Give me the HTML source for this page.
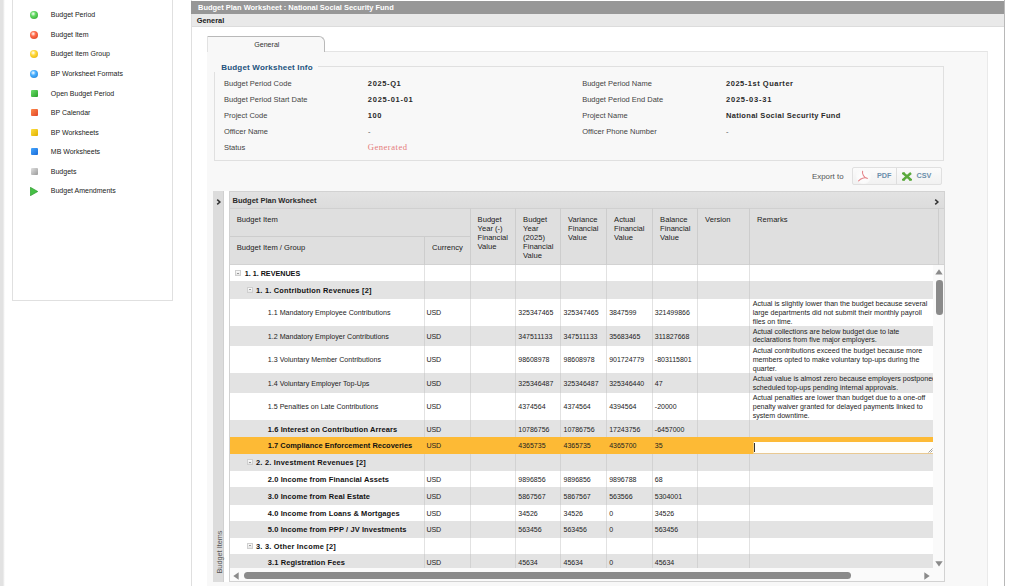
<!DOCTYPE html><html><head><meta charset="utf-8"><style>
*{box-sizing:border-box;margin:0;padding:0}
html,body{width:1024px;height:586px;overflow:hidden;background:#fff;font-family:"Liberation Sans",sans-serif;color:#333}
.a{position:absolute}
.t{position:absolute;white-space:nowrap;line-height:1}
</style></head><body>
<div class="a" style="left:0px;top:0px;width:5px;height:586px;background:linear-gradient(90deg,#e2e2e2 0,#e2e2e2 3px,#f4f4f4 4px,#fff 5px)"></div>
<div class="a" style="left:12px;top:-10px;width:161px;height:311px;border:1px solid #e0e0e0;background:#fff"></div>
<div class="a" style="left:30px;top:11.0px;width:8px;height:8px;border-radius:50%;background:radial-gradient(circle at 40% 35%,#fff 0,#5fd85f 35%,#2a9a2a 100%)"></div>
<div class="t" style="left:50.80px;top:11px;font-size:7.0px;font-weight:normal;color:#222;">Budget Period</div>
<div class="a" style="left:30px;top:30.5px;width:8px;height:8px;border-radius:50%;background:radial-gradient(circle at 40% 35%,#fff 0,#ff6a48 35%,#d03a20 100%)"></div>
<div class="t" style="left:50.80px;top:31px;font-size:7.0px;font-weight:normal;color:#222;">Budget Item</div>
<div class="a" style="left:30px;top:50.1px;width:8px;height:8px;border-radius:50%;background:radial-gradient(circle at 40% 35%,#fff 0,#ffd93a 35%,#e0a800 100%)"></div>
<div class="t" style="left:50.80px;top:50px;font-size:7.0px;font-weight:normal;color:#222;">Budget Item Group</div>
<div class="a" style="left:30px;top:69.6px;width:8px;height:8px;border-radius:50%;background:radial-gradient(circle at 40% 35%,#fff 0,#4ab0ff 35%,#1a78d0 100%)"></div>
<div class="t" style="left:50.80px;top:70px;font-size:7.0px;font-weight:normal;color:#222;">BP Worksheet Formats</div>
<div class="a" style="left:30.7px;top:89.5px;width:7.2px;height:7.2px;border-radius:1px;background:linear-gradient(135deg,#6ee06e,#28a028)"></div>
<div class="t" style="left:50.80px;top:90px;font-size:7.0px;font-weight:normal;color:#222;">Open Budget Period</div>
<div class="a" style="left:30.7px;top:109.1px;width:7.2px;height:7.2px;border-radius:1px;background:linear-gradient(135deg,#ff8a4a,#e0452a)"></div>
<div class="t" style="left:50.80px;top:109px;font-size:7.0px;font-weight:normal;color:#222;">BP Calendar</div>
<div class="a" style="left:30.7px;top:128.6px;width:7.2px;height:7.2px;border-radius:1px;background:linear-gradient(135deg,#ffe040,#e0b000)"></div>
<div class="t" style="left:50.80px;top:129px;font-size:7.0px;font-weight:normal;color:#222;">BP Worksheets</div>
<div class="a" style="left:30.7px;top:148.1px;width:7.2px;height:7.2px;border-radius:1px;background:linear-gradient(135deg,#45a8ff,#1a6ad8)"></div>
<div class="t" style="left:50.80px;top:148px;font-size:7.0px;font-weight:normal;color:#222;">MB Worksheets</div>
<div class="a" style="left:30.7px;top:167.6px;width:7.2px;height:7.2px;border-radius:1px;background:linear-gradient(135deg,#e0e0e0,#9a9a9a)"></div>
<div class="t" style="left:50.80px;top:168px;font-size:7.0px;font-weight:normal;color:#222;">Budgets</div>
<svg class="a" style="left:30px;top:186.6px" width="8" height="9" viewBox="0 0 8 9"><path d="M0.3 0.2 L7.8 4.5 L0.3 8.8 Z" fill="#45c045" stroke="#1e8f1e" stroke-width="0.6"/></svg>
<div class="t" style="left:50.80px;top:187px;font-size:7.0px;font-weight:normal;color:#222;">Budget Amendments</div>
<div class="a" style="left:191px;top:0px;width:1px;height:586px;background:#dfdfdf"></div>
<div class="a" style="left:1004px;top:0px;width:1px;height:586px;background:#b8b8b8"></div>
<div class="a" style="left:191px;top:1px;width:813px;height:13px;background:#979797"></div>
<div class="t" style="left:198.00px;top:4px;font-size:7.48px;font-weight:bold;color:#fff;">Budget Plan Worksheet : National Social Security Fund</div>
<div class="a" style="left:192px;top:14px;width:812px;height:12px;background:#e9e9e9"></div>
<div class="a" style="left:192px;top:26px;width:812px;height:1px;background:#dcdcdc"></div>
<div class="t" style="left:196.70px;top:17px;font-size:7.4px;font-weight:bold;color:#222;">General</div>
<div class="a" style="left:207px;top:51px;width:781px;height:549px;background:#f8f8f8;border-top:1px solid #e4e4e4;border-right:1px solid #eaeaea"></div>
<div class="a" style="left:207px;top:36px;width:118px;height:16px;border:1px solid #b9b9b9;border-left-color:#e2e2e2;border-bottom:none;border-top-right-radius:6px;background:#f8f8f8"></div>
<div class="t" style="left:254.20px;top:42px;font-size:7.1px;font-weight:normal;color:#333;">General</div>
<div class="a" style="left:214px;top:66px;width:730px;height:95px;border:1px solid #e0e0e0"></div>
<div class="a" style="left:213px;top:60px;width:105px;height:12px;background:#f8f8f8"></div>
<div class="t" style="left:221.20px;top:64px;font-size:8.0px;font-weight:bold;color:#22527d;letter-spacing:0.2px">Budget Worksheet Info</div>
<div class="t" style="left:224.00px;top:80px;font-size:7.5px;font-weight:normal;color:#444;">Budget Period Code</div>
<div class="t" style="left:367.85px;top:80px;font-size:7.5px;font-weight:bold;color:#2a2a2a;letter-spacing:0.62px">2025-Q1</div>
<div class="t" style="left:582.20px;top:80px;font-size:7.5px;font-weight:normal;color:#444;">Budget Period Name</div>
<div class="t" style="left:726.00px;top:80px;font-size:7.5px;font-weight:bold;color:#2a2a2a;letter-spacing:0.52px">2025-1st Quarter</div>
<div class="t" style="left:224.00px;top:96px;font-size:7.5px;font-weight:normal;color:#444;">Budget Period Start Date</div>
<div class="t" style="left:367.85px;top:96px;font-size:7.5px;font-weight:bold;color:#2a2a2a;letter-spacing:0.72px">2025-01-01</div>
<div class="t" style="left:582.20px;top:96px;font-size:7.5px;font-weight:normal;color:#444;">Budget Period End Date</div>
<div class="t" style="left:726.00px;top:96px;font-size:7.5px;font-weight:bold;color:#2a2a2a;letter-spacing:0.78px">2025-03-31</div>
<div class="t" style="left:224.00px;top:112px;font-size:7.5px;font-weight:normal;color:#444;">Project Code</div>
<div class="t" style="left:367.85px;top:112px;font-size:7.5px;font-weight:bold;color:#2a2a2a;letter-spacing:0.58px">100</div>
<div class="t" style="left:582.20px;top:112px;font-size:7.5px;font-weight:normal;color:#444;">Project Name</div>
<div class="t" style="left:726.00px;top:112px;font-size:7.5px;font-weight:bold;color:#2a2a2a;letter-spacing:0.3px">National Social Security Fund</div>
<div class="t" style="left:224.00px;top:128px;font-size:7.5px;font-weight:normal;color:#444;">Officer Name</div>
<div class="t" style="left:368.00px;top:128px;font-size:7.5px;font-weight:normal;color:#555;">-</div>
<div class="t" style="left:582.20px;top:128px;font-size:7.5px;font-weight:normal;color:#444;">Officer Phone Number</div>
<div class="t" style="left:726.00px;top:128px;font-size:7.5px;font-weight:normal;color:#555;">-</div>
<div class="t" style="left:224.00px;top:144px;font-size:7.5px;font-weight:normal;color:#444;">Status</div>
<div class="t" style="left:367.7px;top:143px;font-size:8.6px;color:#e57a7a;font-family:'Liberation Serif',serif;letter-spacing:0.5px">Generated</div>
<div class="t" style="left:812.00px;top:173px;font-size:7.9px;font-weight:normal;color:#555;">Export to</div>
<div class="a" style="left:852px;top:167px;width:90px;height:18px;border:1px solid #e0e0e0;border-radius:2px;background:linear-gradient(#fbfbfb,#f1f1f1)"></div>
<div class="a" style="left:896px;top:168px;width:1px;height:16px;background:#dedede"></div>
<div class="a" style="left:855.5px;top:168.5px;width:15px;height:15px;border-radius:50%;background:radial-gradient(circle,#fff 0,#fafafa 60%,rgba(240,240,240,0) 100%)"></div>
<svg class="a" style="left:857px;top:170px" width="12" height="12" viewBox="0 0 12 12"><path d="M5.6 1.2 C5.2 2.2 5.6 4 6.4 5.6 C7.2 7.2 8.6 8.2 10.4 8.4 C9 7.6 7.4 7.6 5.6 8.2 C4 8.8 2.6 9.8 1.6 10.8" fill="none" stroke="#e4868b" stroke-width="1.1" stroke-linecap="round" stroke-linejoin="round"/></svg>
<div class="t" style="left:877.00px;top:172px;font-size:7.25px;font-weight:bold;color:#6a8fab;">PDF</div>
<svg class="a" style="left:901px;top:171px" width="12" height="11" viewBox="0 0 12 11"><path d="M2 2 L10 9 M10 2 L2 9" fill="none" stroke="#5aaa3c" stroke-width="2.4"/><rect x="1" y="1.5" width="3" height="1.6" fill="#5aaa3c"/><rect x="8" y="8" width="3" height="1.6" fill="#5aaa3c"/><rect x="1" y="8" width="3" height="1.6" fill="#5aaa3c"/></svg>
<div class="t" style="left:916.50px;top:172px;font-size:7.25px;font-weight:bold;color:#6a8fab;">CSV</div>
<div class="a" style="left:213px;top:191px;width:11px;height:391px;background:#dcdcdc;border-right:1px solid #d0d0d0"></div>
<div class="a" style="left:224px;top:191px;width:5px;height:391px;background:#fff"></div>
<svg class="a" style="left:215.5px;top:198.5px" width="6" height="6" viewBox="0 0 6 6"><path d="M1.2 0.6 L3.9 3 L1.2 5.4" fill="none" stroke="#333" stroke-width="1.5"/></svg>
<div class="t" style="left:219.5px;top:552px;font-size:7.3px;color:#555;transform:translate(-50%,-50%) rotate(-90deg)">Budget Items</div>
<div class="a" style="left:229px;top:191px;width:716px;height:391px;border:1px solid #d2d2d2;background:#fafafa"></div>
<div class="a" style="left:230px;top:192px;width:714px;height:17px;background:linear-gradient(#e2e2e2,#dcdcdc);border-bottom:1px solid #d0d0d0"></div>
<div class="t" style="left:232.50px;top:197px;font-size:7.5px;font-weight:bold;color:#2a2a2a;">Budget Plan Worksheet</div>
<svg class="a" style="left:934px;top:198.5px" width="6" height="6" viewBox="0 0 6 6"><path d="M1.2 0.6 L3.9 3 L1.2 5.4" fill="none" stroke="#333" stroke-width="1.5"/></svg>
<div class="a" style="left:230px;top:209px;width:714px;height:56px;background:#dfdfdf;border-bottom:1px solid #d2d2d2"></div>
<div class="a" style="left:470px;top:208px;width:1px;height:57px;background:#cdcdcd"></div>
<div class="a" style="left:515px;top:208px;width:1px;height:57px;background:#cdcdcd"></div>
<div class="a" style="left:560px;top:208px;width:1px;height:57px;background:#cdcdcd"></div>
<div class="a" style="left:606px;top:208px;width:1px;height:57px;background:#cdcdcd"></div>
<div class="a" style="left:652px;top:208px;width:1px;height:57px;background:#cdcdcd"></div>
<div class="a" style="left:697px;top:208px;width:1px;height:57px;background:#cdcdcd"></div>
<div class="a" style="left:749px;top:208px;width:1px;height:57px;background:#cdcdcd"></div>
<div class="a" style="left:938px;top:208px;width:1px;height:57px;background:#cdcdcd"></div>
<div class="a" style="left:424px;top:236px;width:1px;height:29px;background:#cdcdcd"></div>
<div class="a" style="left:230px;top:235.7px;width:240px;height:1.0px;background:#cdcdcd"></div>
<div class="t" style="left:236.80px;top:216px;font-size:7.6px;font-weight:normal;color:#222;">Budget Item</div>
<div class="t" style="left:236.80px;top:244px;font-size:7.6px;font-weight:normal;color:#222;">Budget Item / Group</div>
<div class="t" style="left:432.00px;top:244px;font-size:7.6px;font-weight:normal;color:#222;">Currency</div>
<div class="t" style="left:477.60px;top:216px;font-size:7.6px;font-weight:normal;color:#222;">Budget</div>
<div class="t" style="left:477.60px;top:225px;font-size:7.6px;font-weight:normal;color:#222;">Year (-)</div>
<div class="t" style="left:477.60px;top:234px;font-size:7.6px;font-weight:normal;color:#222;">Financial</div>
<div class="t" style="left:477.60px;top:243px;font-size:7.6px;font-weight:normal;color:#222;">Value</div>
<div class="t" style="left:523.10px;top:216px;font-size:7.6px;font-weight:normal;color:#222;">Budget</div>
<div class="t" style="left:523.10px;top:225px;font-size:7.6px;font-weight:normal;color:#222;">Year</div>
<div class="t" style="left:523.10px;top:234px;font-size:7.6px;font-weight:normal;color:#222;">(2025)</div>
<div class="t" style="left:523.10px;top:243px;font-size:7.6px;font-weight:normal;color:#222;">Financial</div>
<div class="t" style="left:523.10px;top:252px;font-size:7.6px;font-weight:normal;color:#222;">Value</div>
<div class="t" style="left:568.10px;top:216px;font-size:7.6px;font-weight:normal;color:#222;">Variance</div>
<div class="t" style="left:568.10px;top:225px;font-size:7.6px;font-weight:normal;color:#222;">Financial</div>
<div class="t" style="left:568.10px;top:234px;font-size:7.6px;font-weight:normal;color:#222;">Value</div>
<div class="t" style="left:614.10px;top:216px;font-size:7.6px;font-weight:normal;color:#222;">Actual</div>
<div class="t" style="left:614.10px;top:225px;font-size:7.6px;font-weight:normal;color:#222;">Financial</div>
<div class="t" style="left:614.10px;top:234px;font-size:7.6px;font-weight:normal;color:#222;">Value</div>
<div class="t" style="left:660.10px;top:216px;font-size:7.6px;font-weight:normal;color:#222;">Balance</div>
<div class="t" style="left:660.10px;top:225px;font-size:7.6px;font-weight:normal;color:#222;">Financial</div>
<div class="t" style="left:660.10px;top:234px;font-size:7.6px;font-weight:normal;color:#222;">Value</div>
<div class="t" style="left:705.10px;top:216px;font-size:7.6px;font-weight:normal;color:#222;">Version</div>
<div class="t" style="left:757.10px;top:216px;font-size:7.6px;font-weight:normal;color:#222;">Remarks</div>
<div class="a" style="left:230px;top:265px;width:703px;height:303px;overflow:hidden">
<div class="a" style="left:0.00px;top:0.00px;width:703.00px;height:16.00px;background:#ffffff"></div>
<div class="a" style="left:194.00px;top:0.00px;width:1.00px;height:16.00px;background:#e2e2e2"></div>
<div class="a" style="left:240.00px;top:0.00px;width:1.00px;height:16.00px;background:#e2e2e2"></div>
<div class="a" style="left:285.00px;top:0.00px;width:1.00px;height:16.00px;background:#e2e2e2"></div>
<div class="a" style="left:330.00px;top:0.00px;width:1.00px;height:16.00px;background:#e2e2e2"></div>
<div class="a" style="left:376.00px;top:0.00px;width:1.00px;height:16.00px;background:#e2e2e2"></div>
<div class="a" style="left:422.00px;top:0.00px;width:1.00px;height:16.00px;background:#e2e2e2"></div>
<div class="a" style="left:467.00px;top:0.00px;width:1.00px;height:16.00px;background:#e2e2e2"></div>
<div class="a" style="left:519.00px;top:0.00px;width:1.00px;height:16.00px;background:#e2e2e2"></div>
<div class="a" style="left:5.00px;top:5.00px;width:6px;height:6px;border:1px solid #cfcfcf;background:linear-gradient(#fafafa,#e6e6e6)"><div class="a" style="left:1px;top:1.5px;width:2px;height:1px;background:#999"></div></div>
<div class="t" style="left:14.70px;top:5px;font-size:7.2px;font-weight:bold;color:#111;">1. 1. REVENUES</div>
<div class="a" style="left:0.00px;top:16.00px;width:703.00px;height:17.50px;background:#e3e3e3"></div>
<div class="a" style="left:194.00px;top:16.00px;width:1.00px;height:17.50px;background:#d2d2d2"></div>
<div class="a" style="left:240.00px;top:16.00px;width:1.00px;height:17.50px;background:#d2d2d2"></div>
<div class="a" style="left:285.00px;top:16.00px;width:1.00px;height:17.50px;background:#d2d2d2"></div>
<div class="a" style="left:330.00px;top:16.00px;width:1.00px;height:17.50px;background:#d2d2d2"></div>
<div class="a" style="left:376.00px;top:16.00px;width:1.00px;height:17.50px;background:#d2d2d2"></div>
<div class="a" style="left:422.00px;top:16.00px;width:1.00px;height:17.50px;background:#d2d2d2"></div>
<div class="a" style="left:467.00px;top:16.00px;width:1.00px;height:17.50px;background:#d2d2d2"></div>
<div class="a" style="left:519.00px;top:16.00px;width:1.00px;height:17.50px;background:#d2d2d2"></div>
<div class="a" style="left:17.00px;top:21.75px;width:6px;height:6px;border:1px solid #cfcfcf;background:linear-gradient(#fafafa,#e6e6e6)"><div class="a" style="left:1px;top:1.5px;width:2px;height:1px;background:#999"></div></div>
<div class="t" style="left:26.00px;top:22px;font-size:7.4px;font-weight:bold;color:#111;letter-spacing:0.22px">1. 1. Contribution Revenues [2]</div>
<div class="a" style="left:0.00px;top:33.50px;width:703.00px;height:27.50px;background:#ffffff"></div>
<div class="a" style="left:194.00px;top:33.50px;width:1.00px;height:27.50px;background:#e2e2e2"></div>
<div class="a" style="left:240.00px;top:33.50px;width:1.00px;height:27.50px;background:#e2e2e2"></div>
<div class="a" style="left:285.00px;top:33.50px;width:1.00px;height:27.50px;background:#e2e2e2"></div>
<div class="a" style="left:330.00px;top:33.50px;width:1.00px;height:27.50px;background:#e2e2e2"></div>
<div class="a" style="left:376.00px;top:33.50px;width:1.00px;height:27.50px;background:#e2e2e2"></div>
<div class="a" style="left:422.00px;top:33.50px;width:1.00px;height:27.50px;background:#e2e2e2"></div>
<div class="a" style="left:467.00px;top:33.50px;width:1.00px;height:27.50px;background:#e2e2e2"></div>
<div class="a" style="left:519.00px;top:33.50px;width:1.00px;height:27.50px;background:#e2e2e2"></div>
<div class="t" style="left:37.80px;top:45px;font-size:7.1px;font-weight:normal;color:#1c1c1c;">1.1 Mandatory Employee Contributions</div>
<div class="t" style="left:196.60px;top:45px;font-size:7.1px;font-weight:normal;color:#222;letter-spacing:-0.25px">USD</div>
<div class="t" style="left:288.30px;top:44px;font-size:7.0px;font-weight:normal;color:#222;">325347465</div>
<div class="t" style="left:333.50px;top:44px;font-size:7.0px;font-weight:normal;color:#222;">325347465</div>
<div class="t" style="left:379.20px;top:44px;font-size:7.0px;font-weight:normal;color:#222;">3847599</div>
<div class="t" style="left:424.80px;top:44px;font-size:7.0px;font-weight:normal;color:#222;">321499866</div>
<div class="t" style="left:522.70px;top:36px;font-size:7.12px;font-weight:normal;color:#1c1c1c;">Actual is slightly lower than the budget because several</div>
<div class="t" style="left:522.70px;top:45px;font-size:7.12px;font-weight:normal;color:#1c1c1c;">large departments did not submit their monthly payroll</div>
<div class="t" style="left:522.70px;top:54px;font-size:7.12px;font-weight:normal;color:#1c1c1c;">files on time.</div>
<div class="a" style="left:0.00px;top:61.00px;width:703.00px;height:19.50px;background:#e3e3e3"></div>
<div class="a" style="left:194.00px;top:61.00px;width:1.00px;height:19.50px;background:#d2d2d2"></div>
<div class="a" style="left:240.00px;top:61.00px;width:1.00px;height:19.50px;background:#d2d2d2"></div>
<div class="a" style="left:285.00px;top:61.00px;width:1.00px;height:19.50px;background:#d2d2d2"></div>
<div class="a" style="left:330.00px;top:61.00px;width:1.00px;height:19.50px;background:#d2d2d2"></div>
<div class="a" style="left:376.00px;top:61.00px;width:1.00px;height:19.50px;background:#d2d2d2"></div>
<div class="a" style="left:422.00px;top:61.00px;width:1.00px;height:19.50px;background:#d2d2d2"></div>
<div class="a" style="left:467.00px;top:61.00px;width:1.00px;height:19.50px;background:#d2d2d2"></div>
<div class="a" style="left:519.00px;top:61.00px;width:1.00px;height:19.50px;background:#d2d2d2"></div>
<div class="t" style="left:37.80px;top:69px;font-size:7.1px;font-weight:normal;color:#1c1c1c;">1.2 Mandatory Employer Contributions</div>
<div class="t" style="left:196.60px;top:69px;font-size:7.1px;font-weight:normal;color:#222;letter-spacing:-0.25px">USD</div>
<div class="t" style="left:288.30px;top:68px;font-size:7.0px;font-weight:normal;color:#222;">347511133</div>
<div class="t" style="left:333.50px;top:68px;font-size:7.0px;font-weight:normal;color:#222;">347511133</div>
<div class="t" style="left:379.20px;top:68px;font-size:7.0px;font-weight:normal;color:#222;">35683465</div>
<div class="t" style="left:424.80px;top:68px;font-size:7.0px;font-weight:normal;color:#222;">311827668</div>
<div class="t" style="left:522.70px;top:64px;font-size:7.12px;font-weight:normal;color:#1c1c1c;">Actual collections are below budget due to late</div>
<div class="t" style="left:522.70px;top:72px;font-size:7.12px;font-weight:normal;color:#1c1c1c;">declarations from five major employers.</div>
<div class="a" style="left:0.00px;top:80.50px;width:703.00px;height:27.50px;background:#ffffff"></div>
<div class="a" style="left:194.00px;top:80.50px;width:1.00px;height:27.50px;background:#e2e2e2"></div>
<div class="a" style="left:240.00px;top:80.50px;width:1.00px;height:27.50px;background:#e2e2e2"></div>
<div class="a" style="left:285.00px;top:80.50px;width:1.00px;height:27.50px;background:#e2e2e2"></div>
<div class="a" style="left:330.00px;top:80.50px;width:1.00px;height:27.50px;background:#e2e2e2"></div>
<div class="a" style="left:376.00px;top:80.50px;width:1.00px;height:27.50px;background:#e2e2e2"></div>
<div class="a" style="left:422.00px;top:80.50px;width:1.00px;height:27.50px;background:#e2e2e2"></div>
<div class="a" style="left:467.00px;top:80.50px;width:1.00px;height:27.50px;background:#e2e2e2"></div>
<div class="a" style="left:519.00px;top:80.50px;width:1.00px;height:27.50px;background:#e2e2e2"></div>
<div class="t" style="left:37.80px;top:92px;font-size:7.1px;font-weight:normal;color:#1c1c1c;">1.3 Voluntary Member Contributions</div>
<div class="t" style="left:196.60px;top:92px;font-size:7.1px;font-weight:normal;color:#222;letter-spacing:-0.25px">USD</div>
<div class="t" style="left:288.30px;top:91px;font-size:7.0px;font-weight:normal;color:#222;">98608978</div>
<div class="t" style="left:333.50px;top:91px;font-size:7.0px;font-weight:normal;color:#222;">98608978</div>
<div class="t" style="left:379.20px;top:91px;font-size:7.0px;font-weight:normal;color:#222;">901724779</div>
<div class="t" style="left:424.80px;top:91px;font-size:7.0px;font-weight:normal;color:#222;">-803115801</div>
<div class="t" style="left:522.70px;top:83px;font-size:7.12px;font-weight:normal;color:#1c1c1c;">Actual contributions exceed the budget because more</div>
<div class="t" style="left:522.70px;top:92px;font-size:7.12px;font-weight:normal;color:#1c1c1c;">members opted to make voluntary top-ups during the</div>
<div class="t" style="left:522.70px;top:101px;font-size:7.12px;font-weight:normal;color:#1c1c1c;">quarter.</div>
<div class="a" style="left:0.00px;top:108.00px;width:703.00px;height:19.70px;background:#e3e3e3"></div>
<div class="a" style="left:194.00px;top:108.00px;width:1.00px;height:19.70px;background:#d2d2d2"></div>
<div class="a" style="left:240.00px;top:108.00px;width:1.00px;height:19.70px;background:#d2d2d2"></div>
<div class="a" style="left:285.00px;top:108.00px;width:1.00px;height:19.70px;background:#d2d2d2"></div>
<div class="a" style="left:330.00px;top:108.00px;width:1.00px;height:19.70px;background:#d2d2d2"></div>
<div class="a" style="left:376.00px;top:108.00px;width:1.00px;height:19.70px;background:#d2d2d2"></div>
<div class="a" style="left:422.00px;top:108.00px;width:1.00px;height:19.70px;background:#d2d2d2"></div>
<div class="a" style="left:467.00px;top:108.00px;width:1.00px;height:19.70px;background:#d2d2d2"></div>
<div class="a" style="left:519.00px;top:108.00px;width:1.00px;height:19.70px;background:#d2d2d2"></div>
<div class="t" style="left:37.80px;top:116px;font-size:7.1px;font-weight:normal;color:#1c1c1c;">1.4 Voluntary Employer Top-Ups</div>
<div class="t" style="left:196.60px;top:116px;font-size:7.1px;font-weight:normal;color:#222;letter-spacing:-0.25px">USD</div>
<div class="t" style="left:288.30px;top:115px;font-size:7.0px;font-weight:normal;color:#222;">325346487</div>
<div class="t" style="left:333.50px;top:115px;font-size:7.0px;font-weight:normal;color:#222;">325346487</div>
<div class="t" style="left:379.20px;top:115px;font-size:7.0px;font-weight:normal;color:#222;">325346440</div>
<div class="t" style="left:424.80px;top:115px;font-size:7.0px;font-weight:normal;color:#222;">47</div>
<div class="t" style="left:522.70px;top:111px;font-size:7.12px;font-weight:normal;color:#1c1c1c;">Actual value is almost zero because employers postponed</div>
<div class="t" style="left:522.70px;top:120px;font-size:7.12px;font-weight:normal;color:#1c1c1c;">scheduled top-ups pending internal approvals.</div>
<div class="a" style="left:0.00px;top:127.70px;width:703.00px;height:27.50px;background:#ffffff"></div>
<div class="a" style="left:194.00px;top:127.70px;width:1.00px;height:27.50px;background:#e2e2e2"></div>
<div class="a" style="left:240.00px;top:127.70px;width:1.00px;height:27.50px;background:#e2e2e2"></div>
<div class="a" style="left:285.00px;top:127.70px;width:1.00px;height:27.50px;background:#e2e2e2"></div>
<div class="a" style="left:330.00px;top:127.70px;width:1.00px;height:27.50px;background:#e2e2e2"></div>
<div class="a" style="left:376.00px;top:127.70px;width:1.00px;height:27.50px;background:#e2e2e2"></div>
<div class="a" style="left:422.00px;top:127.70px;width:1.00px;height:27.50px;background:#e2e2e2"></div>
<div class="a" style="left:467.00px;top:127.70px;width:1.00px;height:27.50px;background:#e2e2e2"></div>
<div class="a" style="left:519.00px;top:127.70px;width:1.00px;height:27.50px;background:#e2e2e2"></div>
<div class="t" style="left:37.80px;top:139px;font-size:7.1px;font-weight:normal;color:#1c1c1c;">1.5 Penalties on Late Contributions</div>
<div class="t" style="left:196.60px;top:139px;font-size:7.1px;font-weight:normal;color:#222;letter-spacing:-0.25px">USD</div>
<div class="t" style="left:288.30px;top:138px;font-size:7.0px;font-weight:normal;color:#222;">4374564</div>
<div class="t" style="left:333.50px;top:138px;font-size:7.0px;font-weight:normal;color:#222;">4374564</div>
<div class="t" style="left:379.20px;top:138px;font-size:7.0px;font-weight:normal;color:#222;">4394564</div>
<div class="t" style="left:424.80px;top:138px;font-size:7.0px;font-weight:normal;color:#222;">-20000</div>
<div class="t" style="left:522.70px;top:130px;font-size:7.12px;font-weight:normal;color:#1c1c1c;">Actual penalties are lower than budget due to a one-off</div>
<div class="t" style="left:522.70px;top:139px;font-size:7.12px;font-weight:normal;color:#1c1c1c;">penalty waiver granted for delayed payments linked to</div>
<div class="t" style="left:522.70px;top:148px;font-size:7.12px;font-weight:normal;color:#1c1c1c;">system downtime.</div>
<div class="a" style="left:0.00px;top:155.20px;width:703.00px;height:16.60px;background:#e3e3e3"></div>
<div class="a" style="left:194.00px;top:155.20px;width:1.00px;height:16.60px;background:#d2d2d2"></div>
<div class="a" style="left:240.00px;top:155.20px;width:1.00px;height:16.60px;background:#d2d2d2"></div>
<div class="a" style="left:285.00px;top:155.20px;width:1.00px;height:16.60px;background:#d2d2d2"></div>
<div class="a" style="left:330.00px;top:155.20px;width:1.00px;height:16.60px;background:#d2d2d2"></div>
<div class="a" style="left:376.00px;top:155.20px;width:1.00px;height:16.60px;background:#d2d2d2"></div>
<div class="a" style="left:422.00px;top:155.20px;width:1.00px;height:16.60px;background:#d2d2d2"></div>
<div class="a" style="left:467.00px;top:155.20px;width:1.00px;height:16.60px;background:#d2d2d2"></div>
<div class="a" style="left:519.00px;top:155.20px;width:1.00px;height:16.60px;background:#d2d2d2"></div>
<div class="t" style="left:37.80px;top:161px;font-size:7.48px;font-weight:bold;color:#111;letter-spacing:0.1px">1.6 Interest on Contribution Arrears</div>
<div class="t" style="left:196.60px;top:162px;font-size:7.1px;font-weight:normal;color:#222;letter-spacing:-0.25px">USD</div>
<div class="t" style="left:288.30px;top:161px;font-size:7.0px;font-weight:normal;color:#222;">10786756</div>
<div class="t" style="left:333.50px;top:161px;font-size:7.0px;font-weight:normal;color:#222;">10786756</div>
<div class="t" style="left:379.20px;top:161px;font-size:7.0px;font-weight:normal;color:#222;">17243756</div>
<div class="t" style="left:424.80px;top:161px;font-size:7.0px;font-weight:normal;color:#222;">-6457000</div>
<div class="a" style="left:0.00px;top:171.80px;width:703.00px;height:17.20px;background:#fdba35"></div>
<div class="t" style="left:37.80px;top:177px;font-size:7.48px;font-weight:bold;color:#111;">1.7 Compliance Enforcement Recoveries</div>
<div class="t" style="left:196.60px;top:178px;font-size:7.1px;font-weight:normal;color:#222;letter-spacing:-0.25px">USD</div>
<div class="t" style="left:288.30px;top:177px;font-size:7.0px;font-weight:normal;color:#222;">4365735</div>
<div class="t" style="left:333.50px;top:177px;font-size:7.0px;font-weight:normal;color:#222;">4365735</div>
<div class="t" style="left:379.20px;top:177px;font-size:7.0px;font-weight:normal;color:#222;">4365700</div>
<div class="t" style="left:424.80px;top:177px;font-size:7.0px;font-weight:normal;color:#222;">35</div>
<div class="a" style="left:523.00px;top:177.00px;width:180.00px;height:11.00px;background:#fffefa;border-left:1px solid #f5d080"></div>
<div class="a" style="left:523.00px;top:188.00px;width:180.00px;height:1.00px;background:#e9c992"></div>
<div class="a" style="left:523.50px;top:178.00px;width:1.00px;height:9.00px;background:#333"></div>
<svg class="a" style="left:698px;top:183px" width="5" height="5" viewBox="0 0 5 5"><path d="M4.5 0.5 L0.5 4.5 M4.5 2.5 L2.5 4.5" stroke="#777" stroke-width="0.7"/></svg>
<div class="a" style="left:0.00px;top:189.00px;width:703.00px;height:16.50px;background:#e3e3e3"></div>
<div class="a" style="left:194.00px;top:189.00px;width:1.00px;height:16.50px;background:#d2d2d2"></div>
<div class="a" style="left:240.00px;top:189.00px;width:1.00px;height:16.50px;background:#d2d2d2"></div>
<div class="a" style="left:285.00px;top:189.00px;width:1.00px;height:16.50px;background:#d2d2d2"></div>
<div class="a" style="left:330.00px;top:189.00px;width:1.00px;height:16.50px;background:#d2d2d2"></div>
<div class="a" style="left:376.00px;top:189.00px;width:1.00px;height:16.50px;background:#d2d2d2"></div>
<div class="a" style="left:422.00px;top:189.00px;width:1.00px;height:16.50px;background:#d2d2d2"></div>
<div class="a" style="left:467.00px;top:189.00px;width:1.00px;height:16.50px;background:#d2d2d2"></div>
<div class="a" style="left:519.00px;top:189.00px;width:1.00px;height:16.50px;background:#d2d2d2"></div>
<div class="a" style="left:17.00px;top:194.25px;width:6px;height:6px;border:1px solid #cfcfcf;background:linear-gradient(#fafafa,#e6e6e6)"><div class="a" style="left:1px;top:1.5px;width:2px;height:1px;background:#999"></div></div>
<div class="t" style="left:26.00px;top:194px;font-size:7.4px;font-weight:bold;color:#111;letter-spacing:0.22px">2. 2. Investment Revenues [2]</div>
<div class="a" style="left:0.00px;top:205.50px;width:703.00px;height:16.70px;background:#ffffff"></div>
<div class="a" style="left:194.00px;top:205.50px;width:1.00px;height:16.70px;background:#e2e2e2"></div>
<div class="a" style="left:240.00px;top:205.50px;width:1.00px;height:16.70px;background:#e2e2e2"></div>
<div class="a" style="left:285.00px;top:205.50px;width:1.00px;height:16.70px;background:#e2e2e2"></div>
<div class="a" style="left:330.00px;top:205.50px;width:1.00px;height:16.70px;background:#e2e2e2"></div>
<div class="a" style="left:376.00px;top:205.50px;width:1.00px;height:16.70px;background:#e2e2e2"></div>
<div class="a" style="left:422.00px;top:205.50px;width:1.00px;height:16.70px;background:#e2e2e2"></div>
<div class="a" style="left:467.00px;top:205.50px;width:1.00px;height:16.70px;background:#e2e2e2"></div>
<div class="a" style="left:519.00px;top:205.50px;width:1.00px;height:16.70px;background:#e2e2e2"></div>
<div class="t" style="left:37.80px;top:211px;font-size:7.48px;font-weight:bold;color:#111;letter-spacing:0.1px">2.0 Income from Financial Assets</div>
<div class="t" style="left:196.60px;top:212px;font-size:7.1px;font-weight:normal;color:#222;letter-spacing:-0.25px">USD</div>
<div class="t" style="left:288.30px;top:211px;font-size:7.0px;font-weight:normal;color:#222;">9896856</div>
<div class="t" style="left:333.50px;top:211px;font-size:7.0px;font-weight:normal;color:#222;">9896856</div>
<div class="t" style="left:379.20px;top:211px;font-size:7.0px;font-weight:normal;color:#222;">9896788</div>
<div class="t" style="left:424.80px;top:211px;font-size:7.0px;font-weight:normal;color:#222;">68</div>
<div class="a" style="left:0.00px;top:222.20px;width:703.00px;height:17.40px;background:#e3e3e3"></div>
<div class="a" style="left:194.00px;top:222.20px;width:1.00px;height:17.40px;background:#d2d2d2"></div>
<div class="a" style="left:240.00px;top:222.20px;width:1.00px;height:17.40px;background:#d2d2d2"></div>
<div class="a" style="left:285.00px;top:222.20px;width:1.00px;height:17.40px;background:#d2d2d2"></div>
<div class="a" style="left:330.00px;top:222.20px;width:1.00px;height:17.40px;background:#d2d2d2"></div>
<div class="a" style="left:376.00px;top:222.20px;width:1.00px;height:17.40px;background:#d2d2d2"></div>
<div class="a" style="left:422.00px;top:222.20px;width:1.00px;height:17.40px;background:#d2d2d2"></div>
<div class="a" style="left:467.00px;top:222.20px;width:1.00px;height:17.40px;background:#d2d2d2"></div>
<div class="a" style="left:519.00px;top:222.20px;width:1.00px;height:17.40px;background:#d2d2d2"></div>
<div class="t" style="left:37.80px;top:228px;font-size:7.48px;font-weight:bold;color:#111;letter-spacing:0.1px">3.0 Income from Real Estate</div>
<div class="t" style="left:196.60px;top:229px;font-size:7.1px;font-weight:normal;color:#222;letter-spacing:-0.25px">USD</div>
<div class="t" style="left:288.30px;top:228px;font-size:7.0px;font-weight:normal;color:#222;">5867567</div>
<div class="t" style="left:333.50px;top:228px;font-size:7.0px;font-weight:normal;color:#222;">5867567</div>
<div class="t" style="left:379.20px;top:228px;font-size:7.0px;font-weight:normal;color:#222;">563566</div>
<div class="t" style="left:424.80px;top:228px;font-size:7.0px;font-weight:normal;color:#222;">5304001</div>
<div class="a" style="left:0.00px;top:239.60px;width:703.00px;height:16.40px;background:#ffffff"></div>
<div class="a" style="left:194.00px;top:239.60px;width:1.00px;height:16.40px;background:#e2e2e2"></div>
<div class="a" style="left:240.00px;top:239.60px;width:1.00px;height:16.40px;background:#e2e2e2"></div>
<div class="a" style="left:285.00px;top:239.60px;width:1.00px;height:16.40px;background:#e2e2e2"></div>
<div class="a" style="left:330.00px;top:239.60px;width:1.00px;height:16.40px;background:#e2e2e2"></div>
<div class="a" style="left:376.00px;top:239.60px;width:1.00px;height:16.40px;background:#e2e2e2"></div>
<div class="a" style="left:422.00px;top:239.60px;width:1.00px;height:16.40px;background:#e2e2e2"></div>
<div class="a" style="left:467.00px;top:239.60px;width:1.00px;height:16.40px;background:#e2e2e2"></div>
<div class="a" style="left:519.00px;top:239.60px;width:1.00px;height:16.40px;background:#e2e2e2"></div>
<div class="t" style="left:37.80px;top:245px;font-size:7.48px;font-weight:bold;color:#111;letter-spacing:0.1px">4.0 Income from Loans &amp; Mortgages</div>
<div class="t" style="left:196.60px;top:246px;font-size:7.1px;font-weight:normal;color:#222;letter-spacing:-0.25px">USD</div>
<div class="t" style="left:288.30px;top:245px;font-size:7.0px;font-weight:normal;color:#222;">34526</div>
<div class="t" style="left:333.50px;top:245px;font-size:7.0px;font-weight:normal;color:#222;">34526</div>
<div class="t" style="left:379.20px;top:245px;font-size:7.0px;font-weight:normal;color:#222;">0</div>
<div class="t" style="left:424.80px;top:245px;font-size:7.0px;font-weight:normal;color:#222;">34526</div>
<div class="a" style="left:0.00px;top:256.00px;width:703.00px;height:16.50px;background:#e3e3e3"></div>
<div class="a" style="left:194.00px;top:256.00px;width:1.00px;height:16.50px;background:#d2d2d2"></div>
<div class="a" style="left:240.00px;top:256.00px;width:1.00px;height:16.50px;background:#d2d2d2"></div>
<div class="a" style="left:285.00px;top:256.00px;width:1.00px;height:16.50px;background:#d2d2d2"></div>
<div class="a" style="left:330.00px;top:256.00px;width:1.00px;height:16.50px;background:#d2d2d2"></div>
<div class="a" style="left:376.00px;top:256.00px;width:1.00px;height:16.50px;background:#d2d2d2"></div>
<div class="a" style="left:422.00px;top:256.00px;width:1.00px;height:16.50px;background:#d2d2d2"></div>
<div class="a" style="left:467.00px;top:256.00px;width:1.00px;height:16.50px;background:#d2d2d2"></div>
<div class="a" style="left:519.00px;top:256.00px;width:1.00px;height:16.50px;background:#d2d2d2"></div>
<div class="t" style="left:37.80px;top:261px;font-size:7.48px;font-weight:bold;color:#111;letter-spacing:0.1px">5.0 Income from PPP / JV Investments</div>
<div class="t" style="left:196.60px;top:262px;font-size:7.1px;font-weight:normal;color:#222;letter-spacing:-0.25px">USD</div>
<div class="t" style="left:288.30px;top:261px;font-size:7.0px;font-weight:normal;color:#222;">563456</div>
<div class="t" style="left:333.50px;top:261px;font-size:7.0px;font-weight:normal;color:#222;">563456</div>
<div class="t" style="left:379.20px;top:261px;font-size:7.0px;font-weight:normal;color:#222;">0</div>
<div class="t" style="left:424.80px;top:261px;font-size:7.0px;font-weight:normal;color:#222;">563456</div>
<div class="a" style="left:0.00px;top:272.50px;width:703.00px;height:16.50px;background:#ffffff"></div>
<div class="a" style="left:194.00px;top:272.50px;width:1.00px;height:16.50px;background:#e2e2e2"></div>
<div class="a" style="left:240.00px;top:272.50px;width:1.00px;height:16.50px;background:#e2e2e2"></div>
<div class="a" style="left:285.00px;top:272.50px;width:1.00px;height:16.50px;background:#e2e2e2"></div>
<div class="a" style="left:330.00px;top:272.50px;width:1.00px;height:16.50px;background:#e2e2e2"></div>
<div class="a" style="left:376.00px;top:272.50px;width:1.00px;height:16.50px;background:#e2e2e2"></div>
<div class="a" style="left:422.00px;top:272.50px;width:1.00px;height:16.50px;background:#e2e2e2"></div>
<div class="a" style="left:467.00px;top:272.50px;width:1.00px;height:16.50px;background:#e2e2e2"></div>
<div class="a" style="left:519.00px;top:272.50px;width:1.00px;height:16.50px;background:#e2e2e2"></div>
<div class="a" style="left:17.00px;top:277.75px;width:6px;height:6px;border:1px solid #cfcfcf;background:linear-gradient(#fafafa,#e6e6e6)"><div class="a" style="left:1px;top:1.5px;width:2px;height:1px;background:#999"></div></div>
<div class="t" style="left:26.00px;top:278px;font-size:7.4px;font-weight:bold;color:#111;letter-spacing:0.22px">3. 3. Other Income [2]</div>
<div class="a" style="left:0.00px;top:289.00px;width:703.00px;height:14.30px;background:#e3e3e3"></div>
<div class="a" style="left:194.00px;top:289.00px;width:1.00px;height:14.30px;background:#d2d2d2"></div>
<div class="a" style="left:240.00px;top:289.00px;width:1.00px;height:14.30px;background:#d2d2d2"></div>
<div class="a" style="left:285.00px;top:289.00px;width:1.00px;height:14.30px;background:#d2d2d2"></div>
<div class="a" style="left:330.00px;top:289.00px;width:1.00px;height:14.30px;background:#d2d2d2"></div>
<div class="a" style="left:376.00px;top:289.00px;width:1.00px;height:14.30px;background:#d2d2d2"></div>
<div class="a" style="left:422.00px;top:289.00px;width:1.00px;height:14.30px;background:#d2d2d2"></div>
<div class="a" style="left:467.00px;top:289.00px;width:1.00px;height:14.30px;background:#d2d2d2"></div>
<div class="a" style="left:519.00px;top:289.00px;width:1.00px;height:14.30px;background:#d2d2d2"></div>
<div class="t" style="left:37.80px;top:294px;font-size:7.48px;font-weight:bold;color:#111;letter-spacing:0.1px">3.1 Registration Fees</div>
<div class="t" style="left:196.60px;top:295px;font-size:7.1px;font-weight:normal;color:#222;letter-spacing:-0.25px">USD</div>
<div class="t" style="left:288.30px;top:294px;font-size:7.0px;font-weight:normal;color:#222;">45634</div>
<div class="t" style="left:333.50px;top:294px;font-size:7.0px;font-weight:normal;color:#222;">45634</div>
<div class="t" style="left:379.20px;top:294px;font-size:7.0px;font-weight:normal;color:#222;">0</div>
<div class="t" style="left:424.80px;top:294px;font-size:7.0px;font-weight:normal;color:#222;">45634</div>
</div>
<div class="a" style="left:933px;top:265px;width:11px;height:303px;background:#fafafa"></div>
<svg class="a" style="left:935px;top:269px" width="8" height="6" viewBox="0 0 8 6"><path d="M0.3 5.5 L4 0.3 L7.7 5.5 Z" fill="#8a8a8a"/></svg>
<div class="a" style="left:936px;top:280px;width:6.5px;height:34.5px;border-radius:3.3px;background:#8a8a8a"></div>
<svg class="a" style="left:935px;top:560.5px" width="8" height="6" viewBox="0 0 8 6"><path d="M0.3 0.3 L4 5.5 L7.7 0.3 Z" fill="#8a8a8a"/></svg>
<div class="a" style="left:230px;top:568.3px;width:714px;height:12.700000000000045px;background:#fafafa"></div>
<svg class="a" style="left:232.5px;top:571.5px" width="6" height="8" viewBox="0 0 6 8"><path d="M5.7 0.2 L0.3 4 L5.7 7.8 Z" fill="#8a8a8a"/></svg>
<div class="a" style="left:244.4px;top:571.8px;width:606.6px;height:7px;border-radius:3.5px;background:#8a8a8a"></div>
<svg class="a" style="left:923.7px;top:571.5px" width="6" height="8" viewBox="0 0 6 8"><path d="M0.3 0.2 L5.7 4 L0.3 7.8 Z" fill="#8a8a8a"/></svg>
</body></html>
